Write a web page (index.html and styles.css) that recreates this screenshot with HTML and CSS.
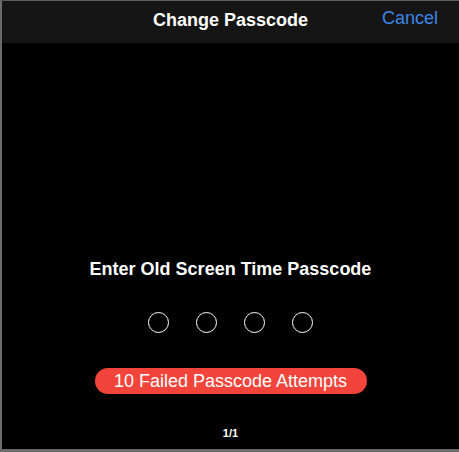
FILE: index.html
```html
<!DOCTYPE html>
<html>

<head>
  <title>Change Passcode</title>
  <link rel="stylesheet" href="styles.css">
</head>

<body>
  <div class="screen">
    <div class="navbar">
      <p class="navbar-title">Change Passcode</p>
      <a class="navbar-cancel">Cancel</a>
    </div>

    <div class="content">
      <p class="prompt">Enter Old Screen Time Passcode</p>
      <div class="dots">
        <span class="dot"></span>
        <span class="dot"></span>
        <span class="dot"></span>
        <span class="dot"></span>
      </div>
      <p class="failed">10 Failed Passcode Attempts</p>
    </div>

    <p class="pager">1/1</p>
  </div>
</body>

</html>
```

FILE: styles.css
```css
* {
  font-family: "Liberation Sans", Arial, sans-serif;
  box-sizing: border-box;
}

body {
  margin: 0;
  background-color: #000000;
}

.screen {
  width: 459px;
  height: 452px;
  border-left: 2px solid #6b6b6b;
  border-top: 1px solid #5a5a5a;
  border-bottom: 3px solid #6b6b6b;
  background-color: #000000;
  display: flex;
  flex-direction: column;
}

/* Navbar */
.navbar {
  position: relative;
  height: 42px;
  background-color: #151515;
  display: flex;
  align-items: center;
  justify-content: center;
}

.navbar-title {
  margin: 0 0 3px;
  color: #ffffff;
  font-size: 18px;
  font-weight: bold;
}

.navbar-cancel {
  position: absolute;
  right: 21px;
  top: 7px;
  color: #3c86e8;
  font-size: 18px;
}

/* Passcode entry */
.content {
  display: flex;
  flex-direction: column;
  align-items: center;
  padding-top: 216px;
}

.prompt {
  margin: 0;
  color: #ffffff;
  font-size: 18px;
  font-weight: bold;
}

.dots {
  display: flex;
  gap: 27px;
  margin-top: 32px;
}

.dot {
  width: 21px;
  height: 21px;
  border: 1.5px solid #ffffff;
  border-radius: 50%;
}

.failed {
  margin: 35px 0 0;
  padding: 3px 10px;
  background-color: #f2443a;
  border-radius: 14px;
  color: #ffffff;
  font-size: 18px;
  line-height: 20px;
  width: 272px;
  text-align: center;
}

.pager {
  margin: 33px 0 0;
  text-align: center;
  color: #ffffff;
  font-size: 11px;
  font-weight: bold;
}
```
